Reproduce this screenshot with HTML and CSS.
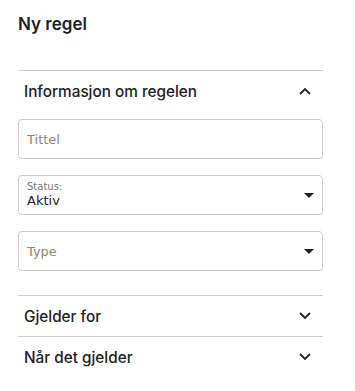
FILE: index.html
```html
<!DOCTYPE html>
<html lang="no">
<head>
  <meta charset="UTF-8">
  <meta name="viewport" content="width=device-width, initial-scale=1.0">
  <title>Ny regel</title>
  <link rel="stylesheet" href="styles.css">
</head>
<body>
  <div class="panel">
    <h1 class="title">Ny regel</h1>

    <div class="section open">
      <div class="section-head">
        <span>Informasjon om regelen</span>
        <svg class="chevron" width="12" height="8" viewBox="0 0 12 8"><path d="M1 7 L6 2 L11 7" fill="none" stroke="#222" stroke-width="1.8"/></svg>
      </div>
      <div class="section-body">
        <input class="field" type="text" placeholder="Tittel">
        <div class="field select">
          <div class="select-value">
            <span class="select-label">Status:</span>
            <span class="select-text">Aktiv</span>
          </div>
          <span class="caret"></span>
        </div>
        <div class="field select">
          <span class="select-placeholder">Type</span>
          <span class="caret"></span>
        </div>
      </div>
    </div>

    <div class="section">
      <div class="section-head">
        <span>Gjelder for</span>
        <svg class="chevron" width="12" height="8" viewBox="0 0 12 8"><path d="M1 1 L6 6 L11 1" fill="none" stroke="#222" stroke-width="1.8"/></svg>
      </div>
    </div>

    <div class="section">
      <div class="section-head">
        <span>Når det gjelder</span>
        <svg class="chevron" width="12" height="8" viewBox="0 0 12 8"><path d="M1 1 L6 6 L11 1" fill="none" stroke="#222" stroke-width="1.8"/></svg>
      </div>
    </div>
  </div>
</body>
</html>
```
FILE: styles.css
```css
body {
  margin: 0;
  background: #fff;
  color: #202124;
  font-family: Inter, "Noto Sans", sans-serif;
}
.panel {
  width: 305px;
  padding: 12px 0 0 18px;
}
.title {
  margin: 0 0 34px 0;
  font-size: 17px;
  line-height: 24px;
  font-weight: 600;
}
.section {
  border-top: 1px solid #cfcfcf;
}
.section-head {
  display: flex;
  align-items: center;
  justify-content: space-between;
  height: 40px;
  padding: 0 12px 0 6px;
  font-size: 15.3px;
  font-weight: 500;
}
.section-body {
  display: flex;
  flex-direction: column;
  gap: 16px;
  padding: 8px 0 24px 0;
}
.field {
  box-sizing: border-box;
  width: 100%;
  height: 40px;
  margin: 0;
  padding: 0 8px;
  border: 1px solid #cccccc;
  border-radius: 4px;
  font-family: "DejaVu Sans", Verdana, sans-serif;
  font-size: 13px;
  color: #202124;
  outline: none;
}
.field::placeholder {
  color: #8b8580;
}
.select {
  display: flex;
  align-items: center;
  justify-content: space-between;
}
.select-value {
  display: flex;
  flex-direction: column;
}
.select-label {
  font-size: 10px;
  line-height: 11px;
  color: #777;
}
.select-text {
  font-size: 13px;
  line-height: 17px;
}
.select-placeholder {
  color: #8b8580;
}
.caret {
  width: 0;
  height: 0;
  border-left: 5px solid transparent;
  border-right: 5px solid transparent;
  border-top: 5px solid #222;
}
```
